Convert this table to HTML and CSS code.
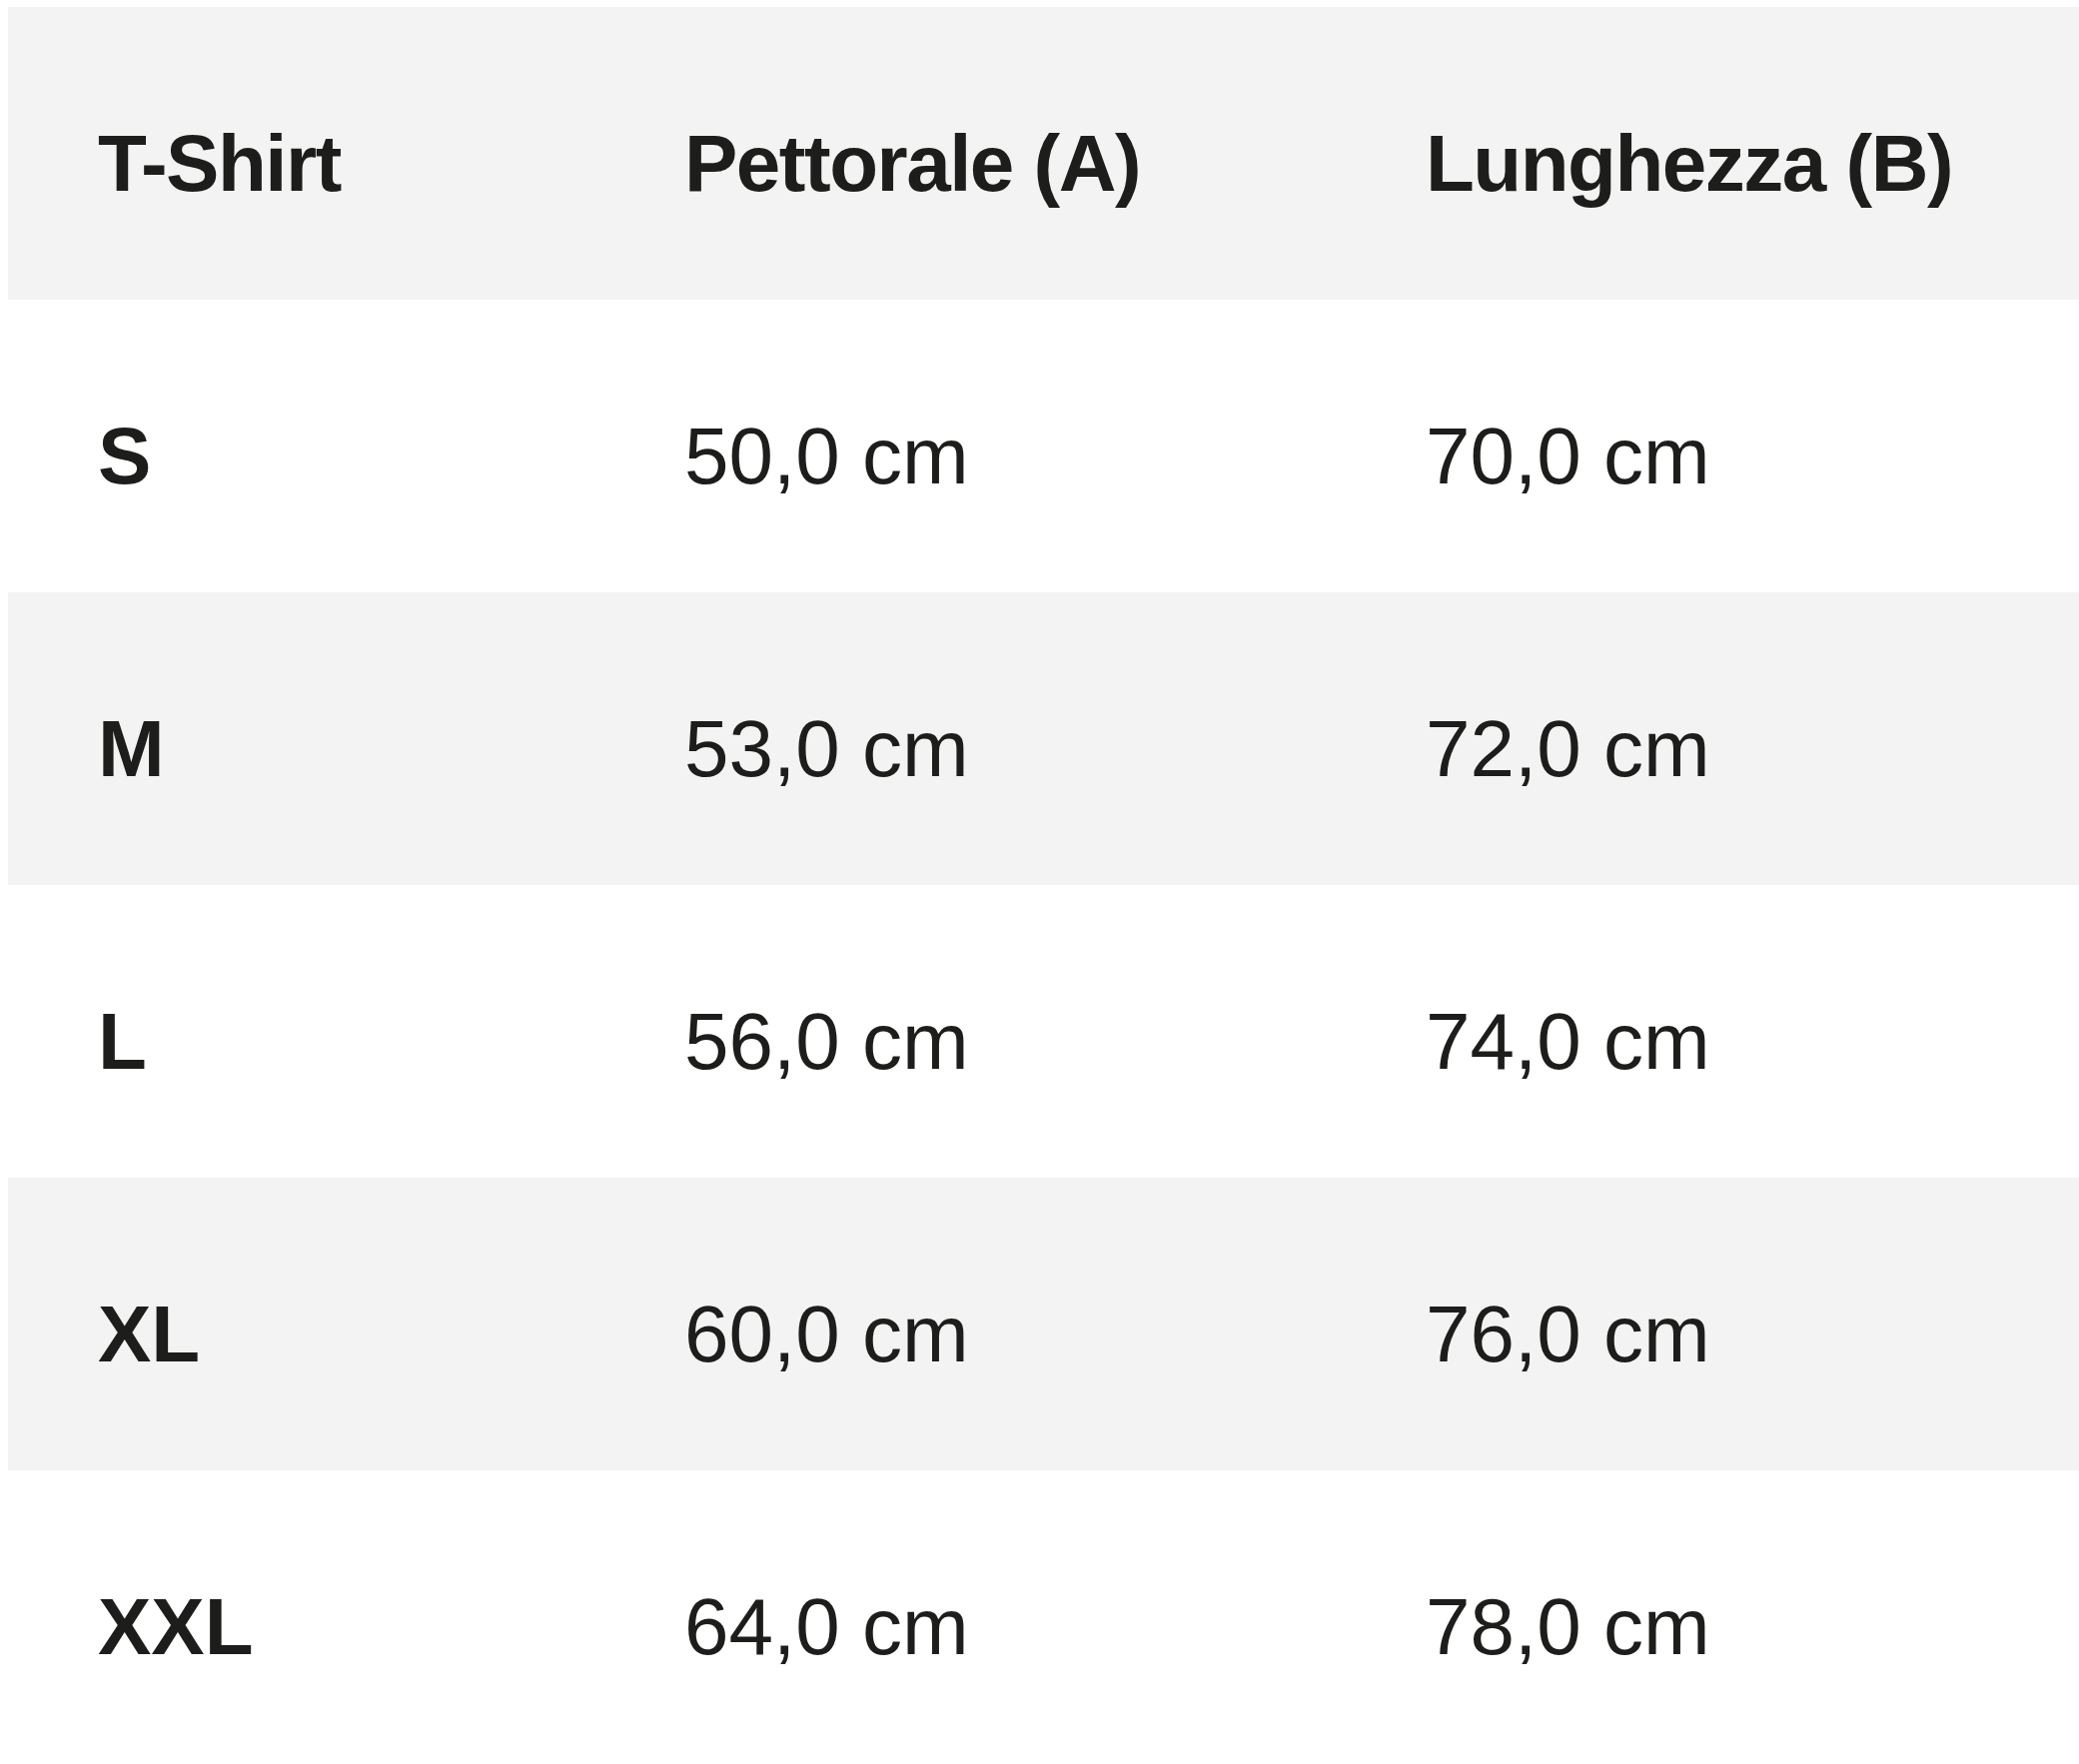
FILE: index.html
```html
<!DOCTYPE html>
<html lang="it">
<head>
<meta charset="utf-8">
<title>Tabella taglie</title>
<link rel="stylesheet" href="styles.css">
</head>
<body>
<div class="size-table">
  <div class="row head">
    <div class="cell">T-Shirt</div>
    <div class="cell">Pettorale (A)</div>
    <div class="cell">Lunghezza (B)</div>
  </div>
  <div class="row">
    <div class="cell size">S</div>
    <div class="cell">50,0 cm</div>
    <div class="cell">70,0 cm</div>
  </div>
  <div class="row alt">
    <div class="cell size">M</div>
    <div class="cell">53,0 cm</div>
    <div class="cell">72,0 cm</div>
  </div>
  <div class="row">
    <div class="cell size">L</div>
    <div class="cell">56,0 cm</div>
    <div class="cell">74,0 cm</div>
  </div>
  <div class="row alt">
    <div class="cell size">XL</div>
    <div class="cell">60,0 cm</div>
    <div class="cell">76,0 cm</div>
  </div>
  <div class="row">
    <div class="cell size">XXL</div>
    <div class="cell">64,0 cm</div>
    <div class="cell">78,0 cm</div>
  </div>
</div>
</body>
</html>
```
FILE: styles.css
```css
html, body {
  background: #ffffff;
}
body {
  margin: 7px 0 0 8px;
  font-family: "Liberation Sans", Arial, sans-serif;
  color: #1d1d1b;
  overflow: hidden;
}
.size-table {
  display: flex;
  flex-direction: column;
}
.row {
  display: grid;
  grid-template-columns: 587px 742px 1fr;
  height: 293px;
  box-sizing: border-box;
  padding-top: 112px;
  font-size: 80px;
  line-height: 90px;
  white-space: nowrap;
}
.row.head,
.row.alt {
  background: #f3f3f3;
}
.row.head .cell,
.cell.size {
  font-weight: 700;
}
.row.head .cell {
  letter-spacing: -1.5px;
}
.cell {
  padding-left: 90px;
}
```
